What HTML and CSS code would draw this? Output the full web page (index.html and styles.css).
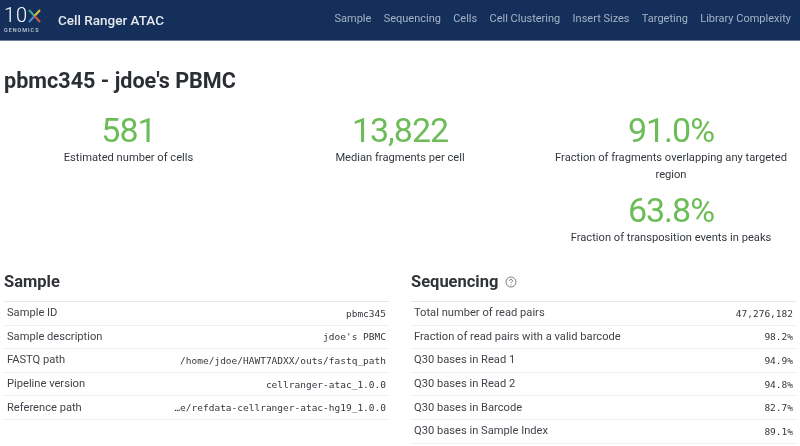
FILE: index.html
```html
<!DOCTYPE html>
<html lang="en">
<head>
<meta charset="utf-8">
<title>Cell Ranger ATAC</title>
<link rel="stylesheet" href="styles.css">
</head>
<body>
<header class="topbar">
  <div class="logo">
    <div class="logo-main"><span class="logo-ten">10</span>
      <svg class="logo-x" width="13" height="14" viewBox="0 0 13 14" aria-hidden="true">
        <path d="M1 1 L6.5 7" stroke="#3fa98f" stroke-width="2" fill="none"/>
        <path d="M12 1 L6.5 7" stroke="#e2c13a" stroke-width="2" fill="none"/>
        <path d="M1 13 L6.5 7" stroke="#3f8fd0" stroke-width="2" fill="none"/>
        <path d="M12 13 L6.5 7" stroke="#d9573f" stroke-width="2" fill="none"/>
      </svg>
    </div>
    <div class="logo-sub">GENOMICS</div>
  </div>
  <div class="app-title">Cell Ranger ATAC</div>
  <nav class="nav">
    <a>Sample</a><a>Sequencing</a><a>Cells</a><a>Cell Clustering</a><a>Insert Sizes</a><a>Targeting</a><a>Library Complexity</a>
  </nav>
</header>
<main class="content">
  <h1 class="page-title">pbmc345 - jdoe's PBMC</h1>
  <section class="metrics">
    <div class="metric"><div class="metric-value">581</div><div class="metric-label">Estimated number of cells</div></div>
    <div class="metric"><div class="metric-value">13,822</div><div class="metric-label">Median fragments per cell</div></div>
    <div class="metric-stack">
      <div class="metric"><div class="metric-value">91.0%</div><div class="metric-label">Fraction of fragments overlapping any targeted region</div></div>
      <div class="metric"><div class="metric-value">63.8%</div><div class="metric-label">Fraction of transposition events in peaks</div></div>
    </div>
  </section>
  <section class="tables">
    <div class="panel">
      <h2 class="panel-title">Sample</h2>
      <div class="rows">
        <div class="row"><span>Sample ID</span><code>pbmc345</code></div>
        <div class="row"><span>Sample description</span><code>jdoe's PBMC</code></div>
        <div class="row"><span>FASTQ path</span><code>/home/jdoe/HAWT7ADXX/outs/fastq_path</code></div>
        <div class="row"><span>Pipeline version</span><code>cellranger-atac_1.0.0</code></div>
        <div class="row"><span>Reference path</span><code>…e/refdata-cellranger-atac-hg19_1.0.0</code></div>
      </div>
    </div>
    <div class="panel">
      <h2 class="panel-title">Sequencing
        <svg class="help" width="12" height="12" viewBox="0 0 12 12" aria-hidden="true">
          <circle cx="6" cy="6" r="5" fill="none" stroke="#7d8287" stroke-width="1"/>
          <path d="M4.4 4.8 C4.4 3 7.6 3 7.6 4.8 C7.6 6 6 5.8 6 7.2" fill="none" stroke="#7d8287" stroke-width="1"/>
          <circle cx="6" cy="8.8" r="0.6" fill="#7d8287"/>
        </svg>
      </h2>
      <div class="rows">
        <div class="row"><span>Total number of read pairs</span><code>47,276,182</code></div>
        <div class="row"><span>Fraction of read pairs with a valid barcode</span><code>98.2%</code></div>
        <div class="row"><span>Q30 bases in Read 1</span><code>94.9%</code></div>
        <div class="row"><span>Q30 bases in Read 2</span><code>94.8%</code></div>
        <div class="row"><span>Q30 bases in Barcode</span><code>82.7%</code></div>
        <div class="row"><span>Q30 bases in Sample Index</span><code>89.1%</code></div>
      </div>
    </div>
  </section>
</main>
</body>
</html>
```
FILE: styles.css
```css
* { box-sizing: border-box; }
html, body { margin: 0; height: 446px; overflow: hidden; background: #fff; }
body { font-family: Roboto, "Liberation Sans", sans-serif; color: #2f3338; filter: blur(0.45px); }

.topbar {
  height: 41px;
  background: #14305a;
  border-bottom: 1px solid #6f83a0;
  display: flex;
  align-items: center;
  padding: 0 9px 0 4px;
}
.logo { width: 54px; color: #fff; padding-bottom: 1px; }
.logo-main { display: flex; align-items: center; height: 20px; }
.logo-ten { font-size: 20px; font-weight: 300; line-height: 20px; letter-spacing: 1px; }
.logo-x { margin: 2px 0 0 0; }
.logo-sub { font-size: 5.5px; line-height: 8px; font-weight: 500; color: #c3ccd9; letter-spacing: 0.95px; padding-top: 1px; height: 9px; }
.app-title { font-size: 13.5px; font-weight: 500; color: #e4e8ee; }
.nav { margin-left: auto; display: flex; gap: 12.3px; font-size: 11px; color: #a5b2c6; margin-top: -4px; }

.content { padding: 0 5px 0 4px; }
.page-title { margin: 27px 0 0; font-size: 21.6px; line-height: 26px; font-weight: 700; color: #2b2f33; }

.metrics {
  display: grid;
  grid-template-columns: 249px 272px 248px;
  column-gap: 11px;
  margin-top: 19px;
  text-align: center;
}
.metric-stack { display: flex; flex-direction: column; gap: 10px; }
.metric-value { font-size: 34px; line-height: 34px; letter-spacing: -1px; color: #6cbd57; }
.metric-label { font-size: 11.15px; line-height: 17px; color: #33383e; margin-top: 2px; }

.tables { display: grid; grid-template-columns: 385px 385px; gap: 22px; margin-top: 25px; }
.panel-title { margin: 0; font-size: 16.5px; line-height: 22px; font-weight: 700; color: #2f3338; height: 30px; display: flex; align-items: flex-start; gap: 7px; }
.help { margin-top: 5px; }
.rows { border-top: 1px solid #e4e6e8; }
.row {
  height: 23.6px;
  display: flex;
  justify-content: space-between;
  align-items: center;
  padding: 0 3px;
  border-bottom: 1px solid #eceef0;
  font-size: 11.15px;
  color: #3f444a;
}
.row span { margin-top: -1px; }
.row code { font-family: "DejaVu Sans Mono", monospace; font-size: 9.5px; color: #33383e; }
```
